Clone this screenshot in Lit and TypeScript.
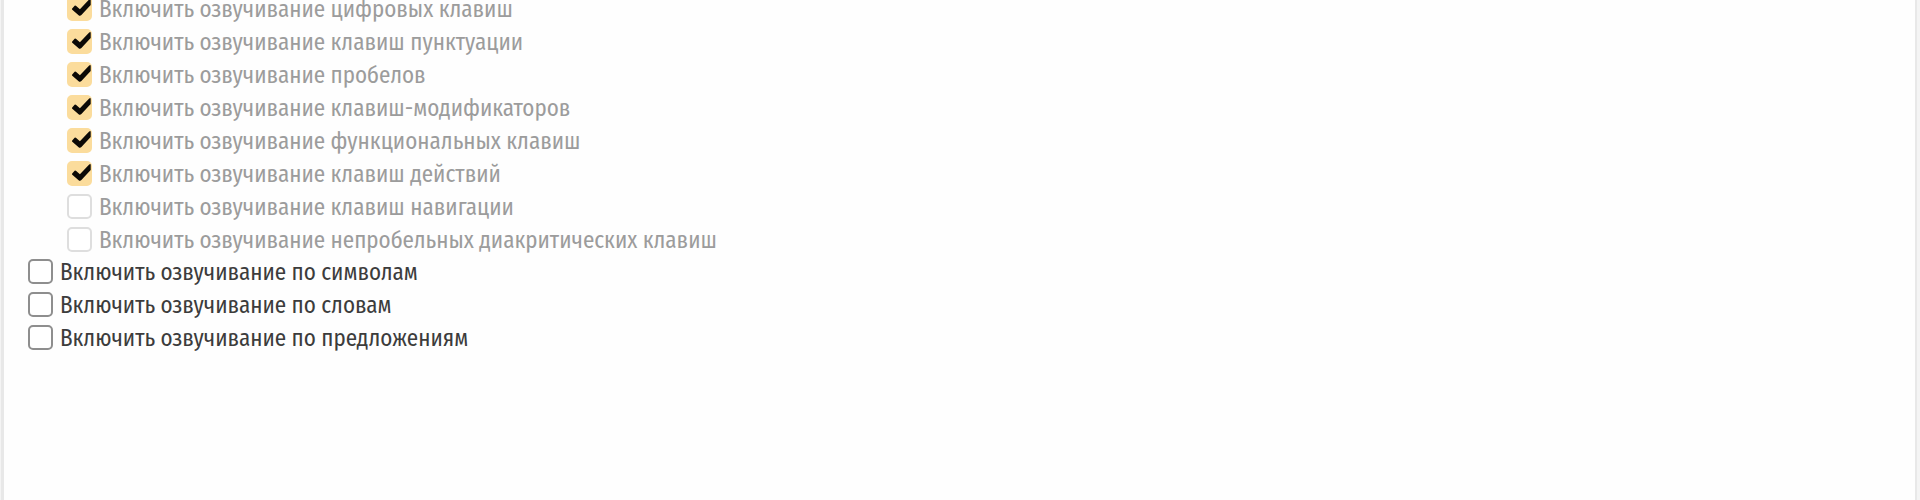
import { LitElement, html, css } from "lit";

interface Option {
  id: string;
  label: string;
  checked?: boolean;
}

const KEY_OPTIONS: Option[] = [
  { id: "digits", label: "Включить озвучивание цифровых клавиш", checked: true },
  { id: "punctuation", label: "Включить озвучивание клавиш пунктуации", checked: true },
  { id: "space", label: "Включить озвучивание пробелов", checked: true },
  { id: "modifiers", label: "Включить озвучивание клавиш-модификаторов", checked: true },
  { id: "functions", label: "Включить озвучивание функциональных клавиш", checked: true },
  { id: "actions", label: "Включить озвучивание клавиш действий", checked: true },
  { id: "navigation", label: "Включить озвучивание клавиш навигации" },
  { id: "diacritics", label: "Включить озвучивание непробельных диакритических клавиш" },
];

const ECHO_OPTIONS: Option[] = [
  { id: "characters", label: "Включить озвучивание по символам" },
  { id: "words", label: "Включить озвучивание по словам" },
  { id: "sentences", label: "Включить озвучивание по предложениям" },
];

class CheckOption extends LitElement {
  static properties = {
    name: { type: String },
    label: { type: String },
    checked: { type: Boolean },
    disabled: { type: Boolean },
  };

  declare name: string;
  declare label: string;
  declare checked: boolean;
  declare disabled: boolean;

  static styles = css`
    :host {
      display: block;
    }
    .row {
      display: flex;
      align-items: center;
      gap: 7px;
      height: 33px;
      color: #3c3c3c;
      white-space: nowrap;
    }
    .row.disabled {
      color: #9c9c9c;
    }
    .control {
      display: grid;
      flex: none;
    }
    .box {
      grid-area: 1 / 1;
      appearance: none;
      box-sizing: border-box;
      width: 25px;
      height: 25px;
      margin: 0;
      border: 2px solid #8e8e8e;
      border-radius: 5px;
      background: #fff;
    }
    .box:disabled {
      border-color: #dedede;
    }
    .box:disabled:checked {
      border-color: #fbdc9c;
      background: #fbdc9c;
    }
    .box:checked:not(:disabled) {
      border-color: #f8b93a;
      background: #f8b93a;
    }
    .mark {
      grid-area: 1 / 1;
      width: 25px;
      height: 25px;
      pointer-events: none;
      visibility: hidden;
    }
    .box:checked + .mark {
      visibility: visible;
    }
    .text {
      line-height: 25px;
      padding-top: 1px;
    }
  `;

  render() {
    return html`
      <label class="row ${this.disabled ? "disabled" : ""}" for=${this.name}>
        <span class="control">
          <input
            class="box"
            type="checkbox"
            id=${this.name}
            .checked=${!!this.checked}
            ?disabled=${this.disabled}
            @change=${(e: Event) => {
              this.checked = (e.target as HTMLInputElement).checked;
            }}
          />
          <svg class="mark" viewBox="0 0 25 25" aria-hidden="true">
            <path
              d="M5.2 12.4 L7.6 9.8 Q8.4 9.1 9.2 9.9 L12.9 13.3 L22.2 3.4 Q23.6 2.2 23.7 3.8 V8.9 L14.4 19 Q13 20.5 11.6 19.2 L5.3 13.8 Q4.6 13.1 5.2 12.4 Z"
              fill="#0b0906"
            />
          </svg>
        </span>
        <span class="text">${this.label}</span>
      </label>
    `;
  }
}
customElements.define("check-option", CheckOption);

class AppRoot extends LitElement {
  static styles = css`
    :host {
      display: block;
      min-height: 100vh;
      overflow: hidden;
      box-sizing: border-box;
      padding: 0 3px 0 1px;
      background: #f4f4f4;
      font-family: "Fira Sans Condensed", "Roboto Condensed", "Roboto", sans-serif;
      font-size: 23px;
    }
    .panel {
      min-height: 100vh;
      box-sizing: border-box;
      padding: 0 24px;
      border: solid #e8e8e8;
      border-width: 0 2px 0 3px;
      background: #fefefe;
      overflow: hidden;
    }
    .options {
      display: flex;
      flex-direction: column;
      margin-top: -8px;
    }
    .nested {
      padding-left: 39px;
      margin-bottom: -1px;
    }
  `;

  private renderOption(option: Option, disabled: boolean) {
    return html`<check-option
      name=${option.id}
      label=${option.label}
      ?checked=${option.checked}
      ?disabled=${disabled}
    ></check-option>`;
  }

  render() {
    return html`
      <main class="panel">
        <div class="options">
          <div class="nested">${KEY_OPTIONS.map((o) => this.renderOption(o, true))}</div>
          ${ECHO_OPTIONS.map((o) => this.renderOption(o, false))}
        </div>
      </main>
    `;
  }
}
customElements.define("app-root", AppRoot);
